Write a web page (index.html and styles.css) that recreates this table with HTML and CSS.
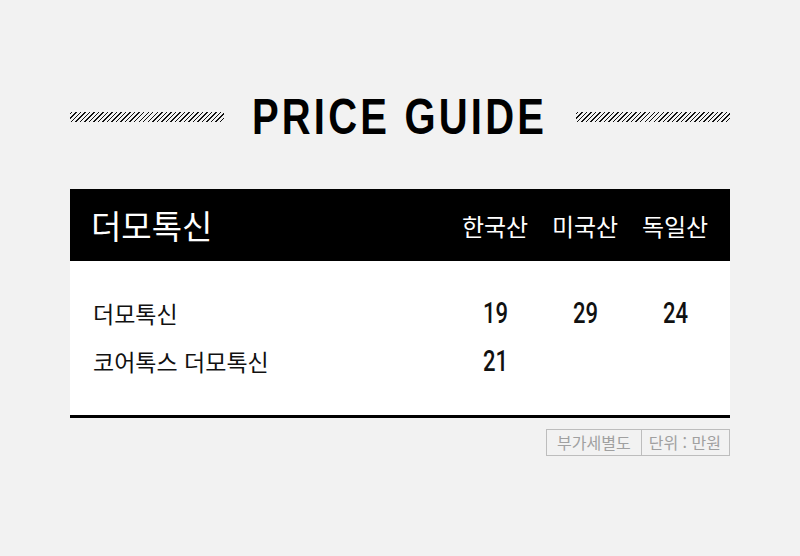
FILE: index.html
```html
<!DOCTYPE html>
<html lang="ko">
<head>
<meta charset="utf-8">
<title>Price Guide</title>
<link rel="stylesheet" href="styles.css">
</head>
<body>
<div class="page">
  <div class="title-row">
    <div class="hatch"></div>
    <h1 class="title"><span class="title-text">PRICE GUIDE</span></h1>
    <div class="hatch"></div>
  </div>
  <div class="table">
    <div class="thead">
      <div class="thead-label">더모톡신</div>
      <div class="col">한국산</div>
      <div class="col">미국산</div>
      <div class="col">독일산</div>
    </div>
    <div class="tbody">
      <div class="row">
        <div class="row-label">더모톡신</div>
        <div class="col num"><span class="digits">19</span></div>
        <div class="col num"><span class="digits">29</span></div>
        <div class="col num"><span class="digits">24</span></div>
      </div>
      <div class="row">
        <div class="row-label">코어톡스 더모톡신</div>
        <div class="col num"><span class="digits">21</span></div>
        <div class="col num"></div>
        <div class="col num"></div>
      </div>
    </div>
  </div>
  <div class="notes">
    <div class="tags">
      <span class="tag">부가세별도</span>
      <span class="tag">단위 : 만원</span>
    </div>
  </div>
</div>
</body>
</html>
```
FILE: styles.css
```css
html, body {
  margin: 0;
  padding: 0;
}
body {
  background: #f2f2f2;
  font-family: "Noto Sans CJK KR", "Noto Sans", sans-serif;
  color: #111;
}
.page {
  width: 660px;
  margin: 0 auto;
  padding-top: 82px;
}
.title-row {
  display: flex;
  align-items: center;
  height: 70px;
}
.hatch {
  flex: 0 0 154px;
  height: 10px;
  background: repeating-linear-gradient(-45deg, transparent 0, transparent 2.2px, #111 2.2px, #111 3.2px);
}
.title {
  flex: 1 1 0;
  min-width: 0;
  display: flex;
  justify-content: center;
  margin: 0;
  font-family: "Liberation Sans", Arial, sans-serif;
  font-weight: 700;
  font-size: 50px;
  line-height: 1;
  color: #000;
  white-space: nowrap;
}
.title-text {
  display: inline-block;
  flex: none;
  letter-spacing: 4px;
  transform: scaleX(0.8);
}
.table {
  margin-top: 37px;
}
.thead {
  display: flex;
  align-items: center;
  height: 72px;
  background: #000;
  color: #fff;
  padding: 0 10px 0 21px;
}
.thead-label {
  flex: 1;
  font-size: 33px;
}
.col {
  width: 90px;
  text-align: center;
}
.thead .col {
  font-size: 24px;
}
.tbody {
  background: #fff;
  padding: 28px 10px 30px 23px;
  border-bottom: 3px solid #000;
}
.row {
  display: flex;
  align-items: center;
  height: 48px;
}
.row-label {
  flex: 1;
  font-size: 23px;
}
.num {
  font-family: Roboto, "Liberation Sans", sans-serif;
  font-weight: 500;
  font-size: 29px;
  color: #111;
}
.digits {
  display: inline-block;
  transform: scaleX(0.76);
}
.notes {
  display: flex;
  justify-content: flex-end;
  margin-top: 11px;
}
.tags {
  display: flex;
  border: 1px solid #bdbdbd;
}
.tag {
  height: 25px;
  line-height: 25px;
  padding: 0 10px 0 10px;
  font-size: 16px;
  color: #a0a0a0;
}
.tag + .tag {
  border-left: 1px solid #bdbdbd;
  padding: 0 8px 0 7px;
}
```
